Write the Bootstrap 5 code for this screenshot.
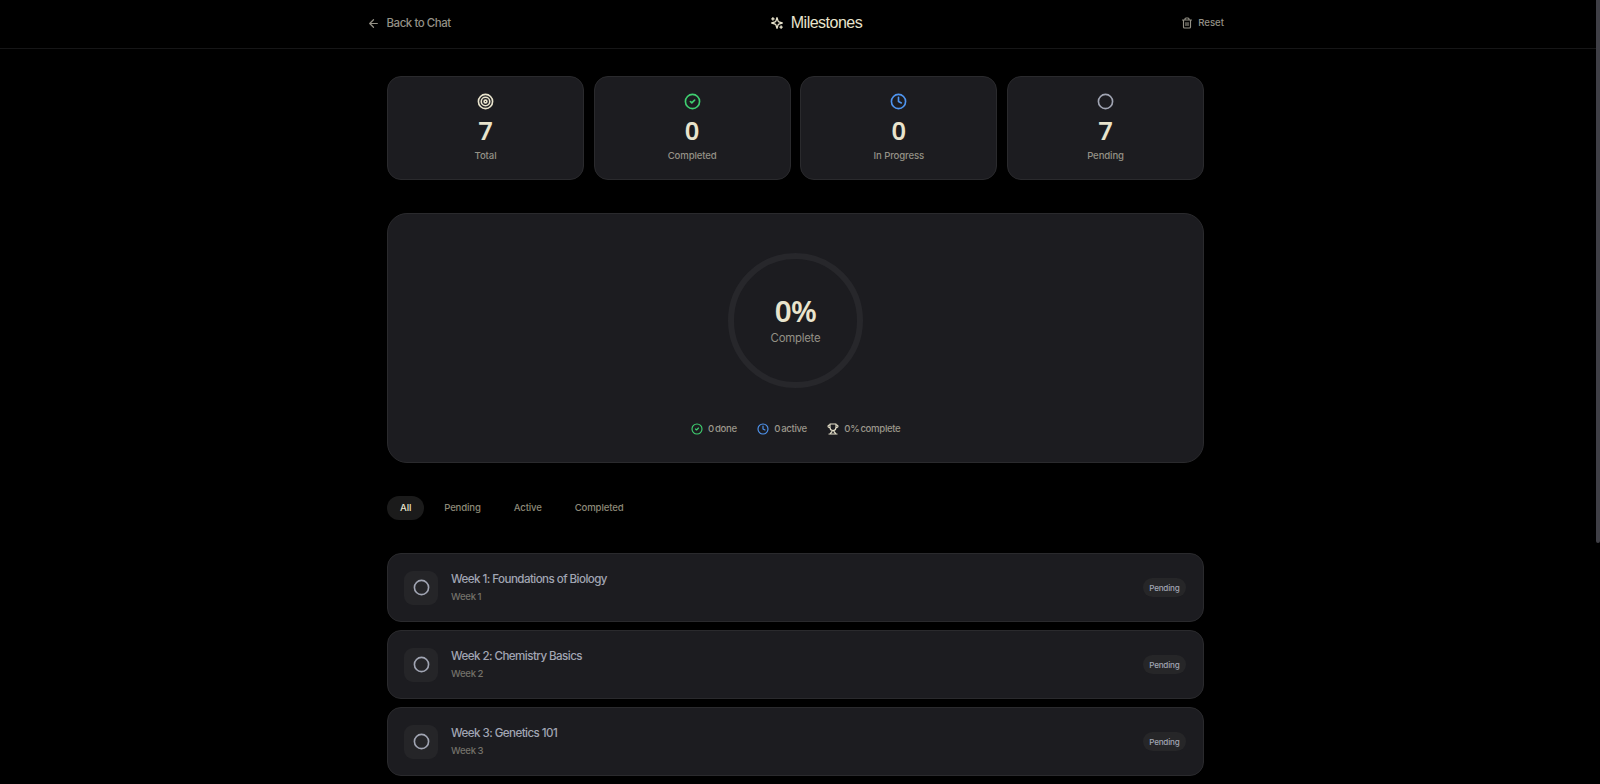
<!DOCTYPE html>
<html lang="en" data-bs-theme="dark">
<head>
<meta charset="utf-8">
<meta name="viewport" content="width=device-width, initial-scale=1">
<title>Milestones</title>
<link href="https://cdn.jsdelivr.net/npm/bootstrap@5.3.0/dist/css/bootstrap.min.css" rel="stylesheet">
<style>
  :root { --surface:#1c1c20; --line:#2a2a2d; --cream:#e9e4cd; --muted:#949186; --slate:#a1a5b3; }
  html, body { height:100%; overflow:hidden; }
  body { background:#000; color:var(--cream); font-family:Inter, "Liberation Sans", sans-serif; font-size:9.6px; line-height:14px; }
  svg { display:block; fill:none; stroke:currentColor; stroke-width:2.3; stroke-linecap:round; stroke-linejoin:round; flex:none; }
  .topbar { height:49px; border-bottom:1px solid #161617; padding-bottom:2px; }
  .topbar-inner { width:857px; margin-left:367px; }
  .link-btn { color:var(--muted); }
  .back { font-size:11.5px; letter-spacing:-.46px; gap:6.5px; font-weight:500; }
  .page-title { font-family:"Liberation Sans", Arial, sans-serif; font-size:16px; letter-spacing:-.5px; line-height:20px; margin:0; font-weight:400; color:var(--cream); }
  .content { width:817px; margin-left:387px; padding-top:26.5px; }
  .stats { display:grid; grid-template-columns:repeat(4,1fr); gap:9.7px; }
  .panel { background:var(--surface); border:1px solid var(--line); }
  .stat { height:104.5px; border-radius:14px; padding-top:16px; }
  .num { font-family:"Noto Sans", sans-serif; font-weight:600; font-size:25.5px; line-height:30px; margin-top:5px; }
  .caption { color:var(--muted); letter-spacing:-.12px; font-weight:500; }
  .stat .caption { margin-top:4px; }
  .overview { height:249.5px; margin-top:33px; border-radius:20px; padding-top:39px; }
  .ring { width:135px; height:135px; border:6.5px solid #27272b; border-radius:50%; }
  .pct { font-family:"Noto Sans", sans-serif; font-weight:600; font-size:29.5px; line-height:34px; letter-spacing:-.6px; position:relative; top:-1.5px; }
  .ring-caption { font-size:11.4px; letter-spacing:-.25px; color:var(--muted); line-height:16px; }
  .legend-row { margin-top:34px; gap:20px; color:#9b978b; word-spacing:-1.2px; letter-spacing:-.33px; font-weight:500; }
  .legend-row > div { gap:5.5px; }
  .tabs { margin-top:33px; gap:7px; }
  .tab { height:24px; padding:0 13px; border-radius:12px; color:#8d8a78; letter-spacing:-.15px; font-weight:500; }
  .tab.on { background:#1b1b1b; color:var(--cream); }
  .items { margin-top:33.5px; gap:8px; }
  .item { height:69px; border-radius:14px; padding:0 17px 0 16px; gap:13px; }
  .tile { width:34px; height:34px; border-radius:9px; background:#252528; color:var(--slate); }
  .item-title { font-size:11.6px; line-height:17px; letter-spacing:-.56px; color:var(--slate); font-weight:500; }
  .item-sub { color:#74726a; line-height:14px; margin-top:2px; letter-spacing:-.25px; word-spacing:-.7px; font-weight:500; }
  .state { height:19px; border-radius:10px; background:#262628; padding:0 6.5px; font-size:8.1px; letter-spacing:-.2px; color:var(--slate); font-weight:500; }
  .thumb { right:0; top:0; width:4px; height:543px; background:#3f3f46; border-radius:0 0 2px 2px; }
  .green { color:#3fcf70; } .blue { color:#4f95f0; }
</style>
</head>
<body>
<svg width="0" height="0" class="position-absolute">
  <symbol id="check" viewBox="0 0 24 24"><circle cx="12" cy="12" r="10"/><path d="m9 12 2 2 4-4"/></symbol>
  <symbol id="clock" viewBox="0 0 24 24"><circle cx="12" cy="12" r="10"/><path d="M12 6v6l4 2"/></symbol>
  <symbol id="circle" viewBox="0 0 24 24"><circle cx="12" cy="12" r="10"/></symbol>
  <symbol id="target" viewBox="0 0 24 24"><circle cx="12" cy="12" r="10"/><circle cx="12" cy="12" r="6"/><circle cx="12" cy="12" r="2"/></symbol>
</svg>
<header class="topbar d-flex align-items-center">
  <div class="topbar-inner d-flex justify-content-between align-items-center">
    <div class="back link-btn d-flex align-items-center">
      <svg width="13" height="13" viewBox="0 0 24 24"><path d="m12 19-7-7 7-7M19 12H5"/></svg><span>Back to Chat</span>
    </div>
    <div class="d-flex align-items-center" style="gap:7px">
      <svg width="14" height="14" viewBox="0 0 24 24"><path d="m12 3-1.9 5.8a2 2 0 0 1-1.3 1.3L3 12l5.8 1.9a2 2 0 0 1 1.3 1.3L12 21l1.9-5.8a2 2 0 0 1 1.3-1.3L21 12l-5.8-1.9a2 2 0 0 1-1.3-1.3ZM5 3v4M19 17v4M3 5h4M17 19h4"/></svg>
      <h1 class="page-title">Milestones</h1>
    </div>
    <div class="link-btn d-flex align-items-center fw-medium" style="gap:5px">
      <svg width="12" height="12" viewBox="0 0 24 24"><path d="M3 6h18M19 6v14a2 2 0 0 1-2 2H7a2 2 0 0 1-2-2V6M8 6V4a2 2 0 0 1 2-2h4a2 2 0 0 1 2 2v2M10 11v6M14 11v6"/></svg><span>Reset</span>
    </div>
  </div>
</header>
<main class="content">
  <section class="stats text-center">
    <div class="panel stat"><svg class="mx-auto" width="17" height="17"><use href="#target"/></svg><div class="num">7</div><div class="caption">Total</div></div>
    <div class="panel stat"><svg class="mx-auto green" width="17" height="17"><use href="#check"/></svg><div class="num">0</div><div class="caption">Completed</div></div>
    <div class="panel stat"><svg class="mx-auto blue" width="17" height="17"><use href="#clock"/></svg><div class="num">0</div><div class="caption">In Progress</div></div>
    <div class="panel stat"><svg class="mx-auto" style="color:#a1a5b3" width="17" height="17"><use href="#circle"/></svg><div class="num">7</div><div class="caption">Pending</div></div>
  </section>
  <section class="panel overview">
    <div class="ring mx-auto d-flex flex-column align-items-center justify-content-center">
      <div class="pct">0%</div><div class="ring-caption">Complete</div>
    </div>
    <div class="legend-row d-flex justify-content-center">
      <div class="d-flex align-items-center"><svg class="green" width="12" height="12"><use href="#check"/></svg><span>0 done</span></div>
      <div class="d-flex align-items-center"><svg class="blue" width="12" height="12"><use href="#clock"/></svg><span>0 active</span></div>
      <div class="d-flex align-items-center"><svg style="color:#e9e4cd" width="12" height="12" viewBox="0 0 24 24"><path d="M6 9H4.500a2.500 2.500 0 0 1 0-5H6M18 9h1.500a2.500 2.500 0 0 0 0-5H18M4 22h16M10 14.660V17c0 .55-.47.98-.97 1.210C7.850 18.750 7 20.240 7 22M14 14.660V17c0 .55.47.98.97 1.210C16.150 18.750 17 20.240 17 22M18 2H6v7a6 6 0 0 0 12 0V2Z"/></svg><span>0% complete</span></div>
    </div>
  </section>
  <nav class="tabs d-flex">
    <div class="tab on d-flex align-items-center">All</div>
    <div class="tab d-flex align-items-center">Pending</div>
    <div class="tab d-flex align-items-center">Active</div>
    <div class="tab d-flex align-items-center">Completed</div>
  </nav>
  <section class="items d-flex flex-column">
    <div class="panel item d-flex align-items-center">
      <div class="tile d-flex align-items-center justify-content-center"><svg width="17" height="17"><use href="#circle"/></svg></div>
      <div class="flex-grow-1"><div class="item-title">Week 1: Foundations of Biology</div><div class="item-sub">Week 1</div></div>
      <div class="state d-flex align-items-center">Pending</div>
    </div>
    <div class="panel item d-flex align-items-center">
      <div class="tile d-flex align-items-center justify-content-center"><svg width="17" height="17"><use href="#circle"/></svg></div>
      <div class="flex-grow-1"><div class="item-title">Week 2: Chemistry Basics</div><div class="item-sub">Week 2</div></div>
      <div class="state d-flex align-items-center">Pending</div>
    </div>
    <div class="panel item d-flex align-items-center">
      <div class="tile d-flex align-items-center justify-content-center"><svg width="17" height="17"><use href="#circle"/></svg></div>
      <div class="flex-grow-1"><div class="item-title">Week 3: Genetics 101</div><div class="item-sub">Week 3</div></div>
      <div class="state d-flex align-items-center">Pending</div>
    </div>
  </section>
</main>
<div class="thumb position-fixed"></div>
<script src="https://cdn.jsdelivr.net/npm/bootstrap@5.3.0/dist/js/bootstrap.bundle.min.js"></script>
</body>
</html>
